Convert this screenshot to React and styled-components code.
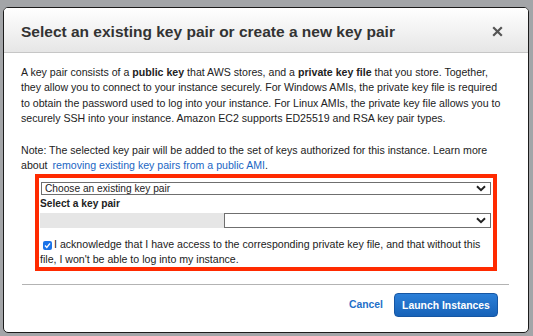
import React, { useState } from 'react'
import styled, { createGlobalStyle } from 'styled-components'

const GlobalStyle = createGlobalStyle`
  body {
    margin: 0;
    background: #a3a5a8;
    font-family: "Liberation Sans", Arial, sans-serif;
  }
`;

const Page = styled.div`
  width: 533px;
  height: 336px;
  padding: 7px 0 0 3px;
  box-sizing: border-box;
  overflow: hidden;
`;

const Modal = styled.div`
  width: 526px;
  height: 326px;
  box-sizing: border-box;
  background: #fff;
  border: 1px solid #1c1c1c;
  border-radius: 5px;
  display: flex;
  flex-direction: column;
  overflow: hidden;
`;

const Header = styled.div`
  height: 45px;
  flex-shrink: 0;
  box-sizing: border-box;
  display: flex;
  align-items: center;
  justify-content: space-between;
  padding: 3px 25px 0 17px;
  background: linear-gradient(#ffffff, #e6e6e6);
  border-bottom: 1px solid #c6c6c6;
`;

const Title = styled.h1`
  margin: 0;
  font-size: 15.5px;
  font-weight: bold;
  color: #333;
`;

const Close = styled.button`
  border: 0;
  background: none;
  padding: 0;
  width: 12px;
  height: 12px;
  display: flex;
  align-items: center;
  justify-content: center;
  cursor: pointer;
`;

const Body = styled.div`
  padding: 12px 10px 0 17px;
  font-size: 10.6px;
  line-height: 15.3px;
  color: #222;
`;

const Para = styled.p`
  margin: 0 0 ${(p) => (p.$last ? 0 : 17)}px;
  white-space: nowrap;
`;

const Link = styled.a`
  color: #1a66c4;
  text-decoration: none;
  margin-left: 5px;
`;

const Highlight = styled.div`
  width: 462px;
  box-sizing: border-box;
  margin-left: 14px;
  border: 4px solid #ff2a00;
  padding: 4px 2px 0 1px;
  height: 97px;
`;

const SelectRow = styled.div`
  display: flex;
  height: ${(p) => p.$h}px;
  margin-left: 1px;
`;

const Redacted = styled.div`
  width: 184px;
  margin-left: -1px;
  background: #e6e6e6;
`;

const SelectBox = styled.div`
  flex: 1;
  display: flex;
  align-items: center;
  justify-content: space-between;
  border: 1px solid #6f6f6f;
  padding: 0 4px 0 3px;
  font-size: 10.2px;
  color: #222;
  box-sizing: border-box;
`;

const Label = styled.div`
  font-weight: bold;
  font-size: 10.2px;
  margin: 1px 0 1px;
  line-height: 16px;
`;

const Ack = styled.label`
  display: block;
  margin-top: 9px;
  font-size: 10.6px;
  line-height: 15.5px;
  color: #222;
  white-space: nowrap;
`;

const Check = styled.span`
  display: inline-flex;
  align-items: center;
  justify-content: center;
  width: 9px;
  height: 9px;
  border-radius: 2px;
  background: #1a73e8;
  margin: 0 2px 0 3px;
  vertical-align: -1px;
`;

const Footer = styled.div`
  margin: auto 19px 0 18px;
  border-top: 1px solid #b3b3b3;
  height: 48px;
  display: flex;
  align-items: flex-start;
  justify-content: flex-end;
  gap: 11px;
  padding: 8px 11px 0 0;
  box-sizing: border-box;
`;

const Cancel = styled.a`
  font-size: 10.4px;
  font-weight: bold;
  line-height: 24px;
  color: #1f6fc9;
  cursor: pointer;
`;

const Primary = styled.button`
  height: 24px;
  width: 104px;
  padding: 0;
  border: 1px solid #1656a3;
  border-radius: 4px;
  background: linear-gradient(#2b7fd8, #1762b8);
  color: #fff;
  font-family: inherit;
  font-size: 10.4px;
  font-weight: bold;
  cursor: pointer;
`;

const Chevron = () => (
  <svg width="10" height="7" viewBox="0 0 10 7">
    <path d="M1 1.2 L5 5.2 L9 1.2" fill="none" stroke="#222" strokeWidth="2" />
  </svg>
);

export default function App() {
  const [checked, setChecked] = useState(true);
  return (
    <>
      <GlobalStyle />
      <Page>
        <Modal>
          <Header>
            <Title>Select an existing key pair or create a new key pair</Title>
            <Close aria-label="Close">
              <svg width="11" height="11" viewBox="0 0 11 11">
                <path d="M1.2 1.2 L9.8 9.8 M9.8 1.2 L1.2 9.8" stroke="#555" strokeWidth="2.2" />
              </svg>
            </Close>
          </Header>
          <Body>
            <Para>
              A key pair consists of a <b>public key</b> that AWS stores, and a <b>private key file</b> that you store. Together,
              <br />
              they allow you to connect to your instance securely. For Windows AMIs, the private key file is required
              <br />
              to obtain the password used to log into your instance. For Linux AMIs, the private key file allows you to
              <br />
              securely SSH into your instance. Amazon EC2 supports ED25519 and RSA key pair types.
            </Para>
            <Para $last>
              Note: The selected key pair will be added to the set of keys authorized for this instance. Learn more
              <br />
              about<Link href="#">removing existing key pairs from a public AMI</Link>.
            </Para>
            <Highlight>
              <SelectRow $h={13}>
                <SelectBox>
                  <span>Choose an existing key pair</span>
                  <Chevron />
                </SelectBox>
              </SelectRow>
              <Label>Select a key pair</Label>
              <SelectRow $h={15}>
                <Redacted />
                <SelectBox>
                  <span />
                  <Chevron />
                </SelectBox>
              </SelectRow>
              <Ack onClick={() => setChecked(!checked)}>
                <Check>
                  {checked && (
                    <svg width="7" height="7" viewBox="0 0 7 7">
                      <path d="M1 3.6 L2.8 5.4 L6 1.4" fill="none" stroke="#fff" strokeWidth="1.4" />
                    </svg>
                  )}
                </Check>
                I acknowledge that I have access to the corresponding private key file, and that without this
                <br />
                file, I won't be able to log into my instance.
              </Ack>
            </Highlight>
          </Body>
          <Footer>
            <Cancel>Cancel</Cancel>
            <Primary>Launch Instances</Primary>
          </Footer>
        </Modal>
      </Page>
    </>
  );
}
